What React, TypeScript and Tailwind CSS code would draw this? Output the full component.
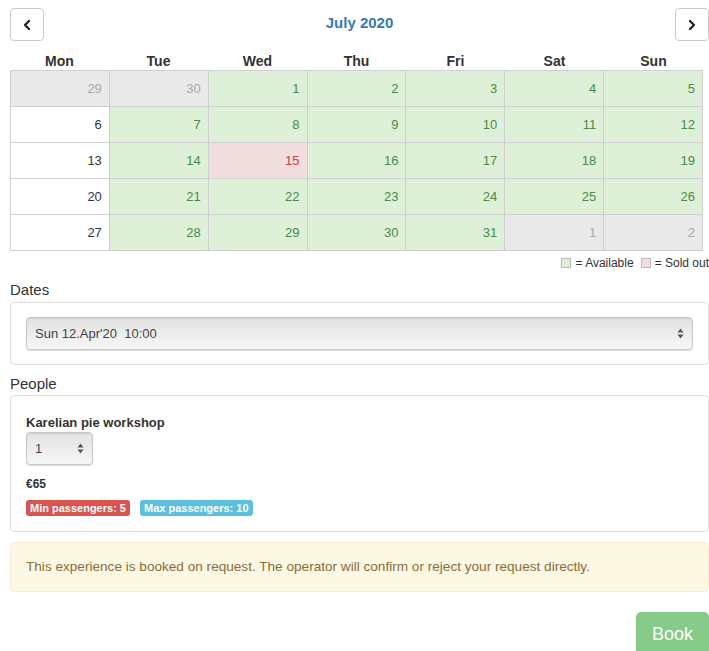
import { ChevronLeft, ChevronRight } from "lucide-react"

type Day = { n: number; kind: "muted" | "plain" | "open" | "sold" }

const weekdays = ["Mon", "Tue", "Wed", "Thu", "Fri", "Sat", "Sun"]

function buildWeeks(): Day[][] {
  const days: Day[] = [
    { n: 29, kind: "muted" },
    { n: 30, kind: "muted" },
  ]
  for (let d = 1; d <= 31; d++) {
    let kind: Day["kind"] = "open"
    if (d === 6 || d === 13 || d === 20 || d === 27) kind = "plain"
    if (d === 15) kind = "sold"
    days.push({ n: d, kind })
  }
  days.push({ n: 1, kind: "muted" }, { n: 2, kind: "muted" })
  const weeks: Day[][] = []
  for (let i = 0; i < days.length; i += 7) weeks.push(days.slice(i, i + 7))
  return weeks
}

const cellStyle: Record<Day["kind"], string> = {
  muted: "bg-[#e9e9e9] text-[#a8a8a8]",
  plain: "bg-white text-[#333]",
  open: "bg-[#dff0d8] text-[#478c47]",
  sold: "bg-[#f2dede] text-[#c9403c]",
}

function SelectBox({ value, className }: { value: string; className: string }) {
  return (
    <div
      className={`flex items-center justify-between rounded-[4px] border border-[#c8c8c8] bg-gradient-to-b from-[#e2e2e2] to-[#f7f7f7] pl-[8px] pr-[8px] text-[13px] text-[#444] shadow-[inset_0_1px_1px_rgba(0,0,0,0.08),0_1px_1px_rgba(0,0,0,0.15)] ${className}`}
    >
      <span className="whitespace-pre">{value}</span>
      <svg width="7" height="11" viewBox="0 0 7 11" className="text-[#555]">
        <path d="M3.5 0.5 L6.5 4.5 H0.5 Z" fill="currentColor" />
        <path d="M3.5 10.5 L6.5 6.5 H0.5 Z" fill="currentColor" />
      </svg>
    </div>
  )
}

export default function App() {
  const weeks = buildWeeks()

  return (
    <div className="w-[709px] bg-white pl-[10px] font-['Liberation_Sans',Arial,sans-serif] text-[#333]">
      {/* month navigation */}
      <div className="flex h-[41px] items-start justify-between pt-[8px]">
        <button className="flex h-[33px] w-[34px] items-center justify-center rounded-[4px] border border-[#ccc] bg-white text-[#222]">
          <ChevronLeft size={16} strokeWidth={3.5} />
        </button>
        <div className="pt-[4px] text-[15px] font-bold text-[#337ab7]">July 2020</div>
        <button className="flex h-[33px] w-[34px] items-center justify-center rounded-[4px] border border-[#ccc] bg-white text-[#222]">
          <ChevronRight size={16} strokeWidth={3.5} />
        </button>
      </div>

      {/* calendar */}
      <div className="w-[693px]">
        <div className="grid h-[29px] grid-cols-7 items-end text-[14px] font-bold leading-[18px]">
          {weekdays.map((w) => (
            <div key={w} className="text-center">
              {w}
            </div>
          ))}
        </div>
        <div className="border-l border-t border-[#cfcfcf]">
          {weeks.map((week, i) => (
            <div key={i} className="grid grid-cols-7">
              {week.map((d, j) => (
                <div
                  key={j}
                  className={`flex h-[36px] items-center justify-end border-b border-r border-[#cfcfcf] pr-[7px] text-[13px] ${cellStyle[d.kind]}`}
                >
                  {d.n}
                </div>
              ))}
            </div>
          ))}
        </div>
      </div>

      {/* legend */}
      <div className="flex h-[24px] items-center justify-end gap-[4px] text-[12px] text-[#333]">
        <span className="inline-block h-[10px] w-[10px] border border-[#bbb] bg-[#dff0d8]" />
        <span>= Available</span>
        <span className="ml-[3px] inline-block h-[10px] w-[10px] border border-[#bbb] bg-[#f2dede]" />
        <span>= Sold out</span>
      </div>

      {/* dates */}
      <div className="pt-[6px] text-[15px] leading-[18px]">Dates</div>
      <div className="mt-[3px] rounded-[4px] border border-[#ddd] px-[15px] py-[14px]">
        <SelectBox value="Sun 12.Apr'20  10:00" className="h-[33px] w-full" />
      </div>

      {/* people */}
      <div className="pt-[10px] text-[15px] leading-[18px]">People</div>
      <div className="mt-[2px] rounded-[4px] border border-[#ddd] px-[15px] pb-[15px] pt-[19px]">
        <div className="text-[13px] font-bold leading-[15px]">Karelian pie workshop</div>
        <SelectBox value="1" className="mt-[2px] h-[33px] w-[67px]" />
        <div className="mt-[12px] text-[12px] font-bold leading-[14px]">€65</div>
        <div className="mt-[9px] flex gap-[10px] text-[11px] font-bold leading-[16px] text-white">
          <span className="rounded-[3px] bg-[#d9534f] px-[4px]">Min passengers: 5</span>
          <span className="rounded-[3px] bg-[#5bc0de] px-[4px]">Max passengers: 10</span>
        </div>
      </div>

      {/* on-request notice */}
      <div className="mt-[10px] flex h-[50px] items-center rounded-[4px] border border-[#faebcc] bg-[#fcf8e3] px-[15px] text-[13.6px] text-[#8a6d3b]">
        This experience is booked on request. The operator will confirm or reject your request directly.
      </div>

      <div className="mt-[20px] flex justify-end">
        <button className="h-[44px] w-[73px] rounded-[5px] bg-[#86cb88] text-[18px] text-white">
          Book
        </button>
      </div>
    </div>
  )
}
